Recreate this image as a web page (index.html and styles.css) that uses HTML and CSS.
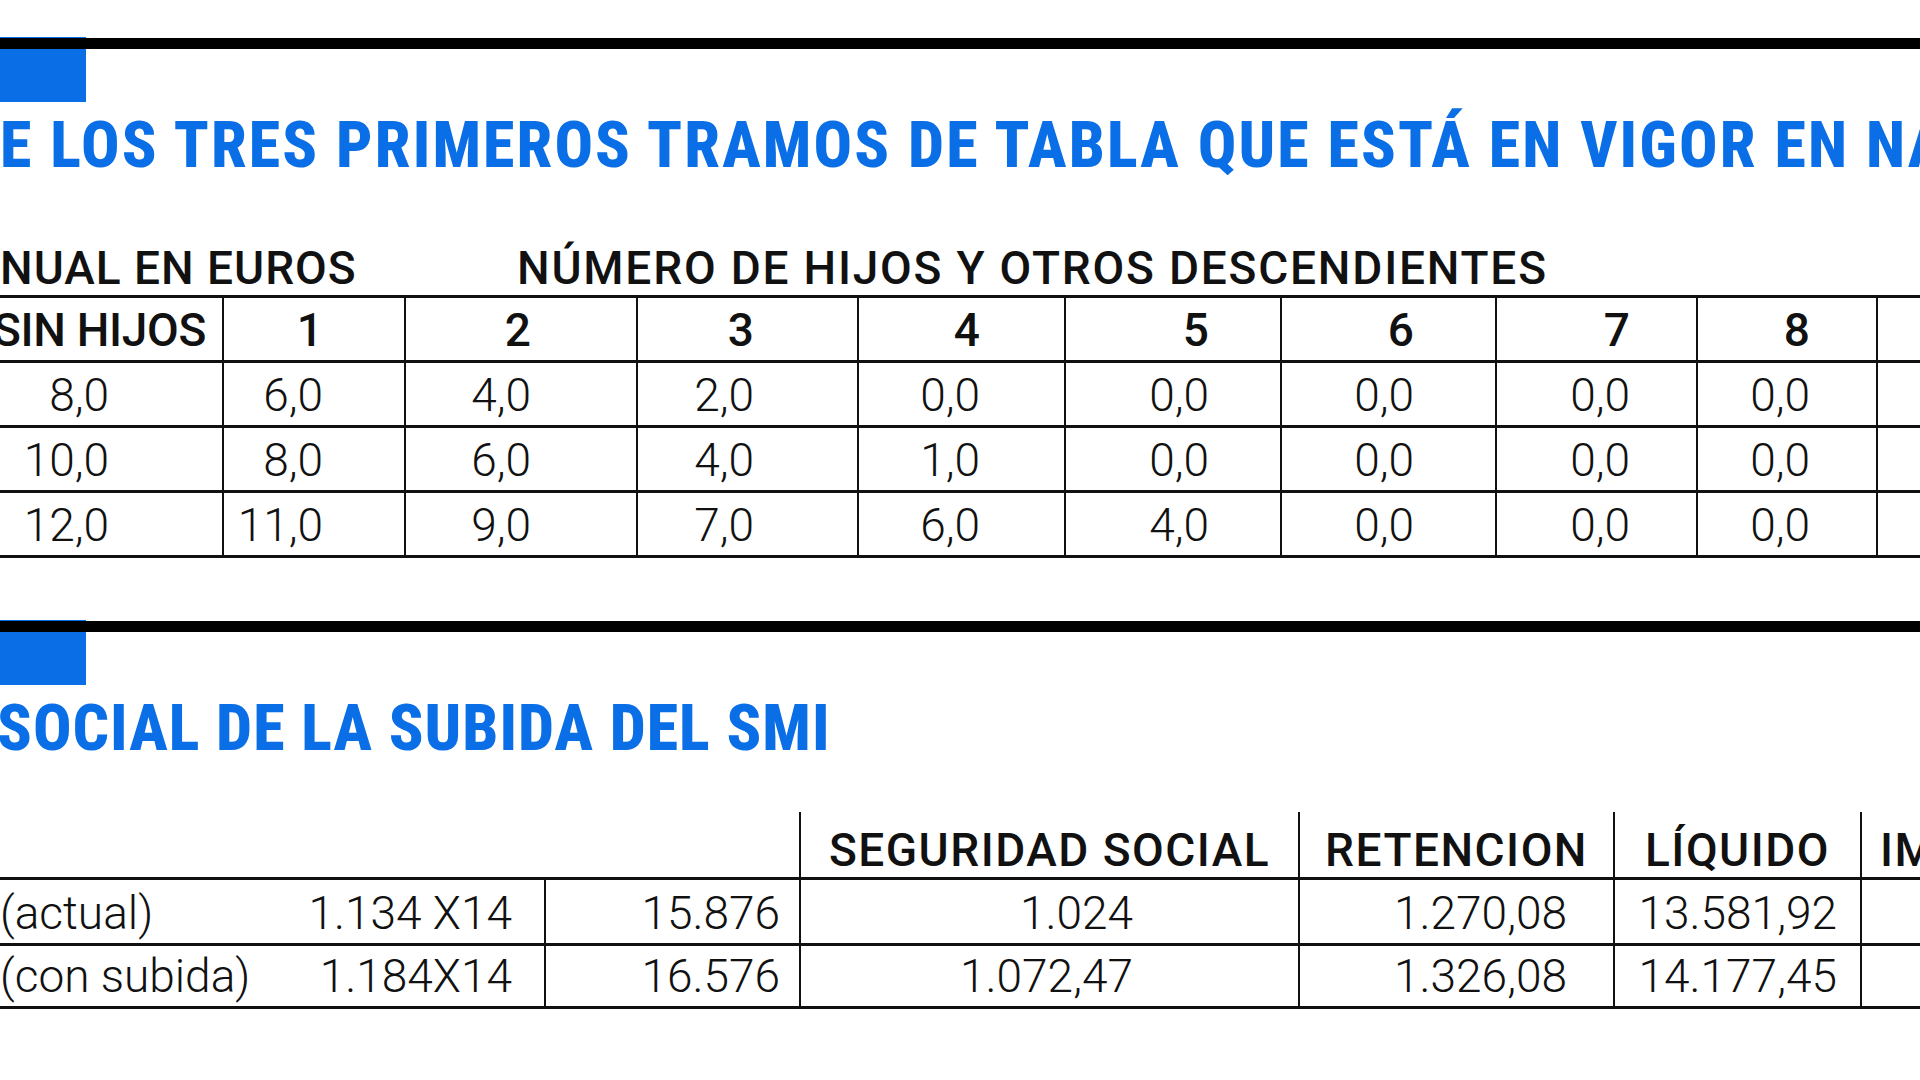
FILE: index.html
```html
<!DOCTYPE html>
<html lang="es">
<head>
<meta charset="utf-8">
<title>Tramos y subida del SMI</title>
<link rel="stylesheet" href="styles.css">
</head>
<body>
<main class="page">
  <section class="block">
    <div class="block-head">
      <div class="tab"></div>
      <div class="rule"></div>
    </div>
    <h1 class="title title-1">E LOS TRES PRIMEROS TRAMOS DE TABLA QUE ESTÁ EN VIGOR EN NA</h1>
    <div class="subhead">
      <span class="subhead-left">NUAL EN EUROS</span>
      <span class="subhead-right">NÚMERO DE HIJOS Y OTROS DESCENDIENTES</span>
    </div>
    <div class="grid1">
      <div class="r1 head">
        <div class="c">SIN HIJOS</div><div class="c">1</div><div class="c">2</div><div class="c">3</div><div class="c">4</div><div class="c">5</div><div class="c">6</div><div class="c">7</div><div class="c">8</div><div class="c"></div>
      </div>
      <div class="r1">
        <div class="c">8,0</div><div class="c">6,0</div><div class="c">4,0</div><div class="c">2,0</div><div class="c">0,0</div><div class="c">0,0</div><div class="c">0,0</div><div class="c">0,0</div><div class="c">0,0</div><div class="c"></div>
      </div>
      <div class="r1">
        <div class="c">10,0</div><div class="c">8,0</div><div class="c">6,0</div><div class="c">4,0</div><div class="c">1,0</div><div class="c">0,0</div><div class="c">0,0</div><div class="c">0,0</div><div class="c">0,0</div><div class="c"></div>
      </div>
      <div class="r1">
        <div class="c">12,0</div><div class="c">11,0</div><div class="c">9,0</div><div class="c">7,0</div><div class="c">6,0</div><div class="c">4,0</div><div class="c">0,0</div><div class="c">0,0</div><div class="c">0,0</div><div class="c"></div>
      </div>
    </div>
  </section>

  <section class="block block-2">
    <div class="block-head">
      <div class="tab"></div>
      <div class="rule"></div>
    </div>
    <h2 class="title title-2">SOCIAL DE LA SUBIDA DEL SMI</h2>
    <div class="grid2">
      <div class="r2 head">
        <div class="d"></div><div class="d"></div><div class="d"></div><div class="d">SEGURIDAD SOCIAL</div><div class="d">RETENCION</div><div class="d">LÍQUIDO</div><div class="d">IM</div>
      </div>
      <div class="r2 body first">
        <div class="d">(actual)</div><div class="d">1.134 X14</div><div class="d">15.876</div><div class="d">1.024</div><div class="d">1.270,08</div><div class="d">13.581,92</div><div class="d"></div>
      </div>
      <div class="r2 body">
        <div class="d">(con subida)</div><div class="d">1.184X14</div><div class="d">16.576</div><div class="d">1.072,47</div><div class="d">1.326,08</div><div class="d">14.177,45</div><div class="d"></div>
      </div>
    </div>
  </section>
</main>
</body>
</html>
```
FILE: styles.css
```css
* { box-sizing: border-box; }

html, body {
  margin: 0;
  padding: 0;
  background: #ffffff;
}

body {
  width: 1920px;
  height: 1080px;
  overflow: hidden;
  font-family: Roboto, "Liberation Sans", sans-serif;
  color: #111111;
}

.page {
  display: flex;
  flex-direction: column;
}

/* ---------- section heads ---------- */
.block { display: flex; flex-direction: column; }
.block-head {
  position: relative;
  margin-top: 37px;
  height: 65px;
}
.block-2 .block-head { margin-top: 62px; }

.tab {
  width: 86px;
  height: 65px;
  background: #0a6fe6;
}
.rule {
  position: absolute;
  top: 1px;
  left: 0;
  width: 100%;
  height: 11px;
  background: #000000;
}

.title {
  margin: 12px 0 0 0;
  font-family: "Roboto Condensed", Roboto, sans-serif;
  font-stretch: condensed;
  font-weight: 800;
  font-size: 64px;
  line-height: 64px;
  letter-spacing: 1px;
  color: #0a6fe6;
  white-space: nowrap;
}
.title-1 { letter-spacing: 2.1px; }
.title-2 { text-indent: -3px; }

/* ---------- table 1 ---------- */
.subhead {
  display: flex;
  margin-top: 67px;
  font-weight: 500;
  font-size: 46px;
  line-height: 46px;
  letter-spacing: 1px;
  white-space: nowrap;
}
.subhead-left { width: 517px; flex: none; }
.subhead-right { letter-spacing: 1.8px; }

.grid1 {
  margin-top: 4px;
  border-top: 3px solid #111;
}
.r1 {
  display: grid;
  grid-template-columns: 224px 182px 232px 221px 207px 216px 215px 201px 180px 1fr;
  height: 65px;
}
.c {
  display: flex;
  justify-content: flex-end;
  height: 65px;
  padding-top: 3px;
  border-bottom: 3px solid #111;
  border-right: 2px solid #111;
  font-weight: 300;
  font-size: 46px;
  line-height: 59px;
  white-space: nowrap;
}
.r1 .c:nth-child(10) { border-right: none; }
.r1.head .c { font-weight: 500; }

.r1 .c:nth-child(1) { padding-right: 113px; }
.r1 .c:nth-child(2) { padding-right: 81px; }
.r1 .c:nth-child(3) { padding-right: 105px; }
.r1 .c:nth-child(4) { padding-right: 103px; }
.r1 .c:nth-child(5) { padding-right: 84px; }
.r1 .c:nth-child(6) { padding-right: 71px; }
.r1 .c:nth-child(7) { padding-right: 81px; }
.r1 .c:nth-child(8) { padding-right: 66px; }
.r1 .c:nth-child(9) { padding-right: 66px; }
.r1.head .c:nth-child(1) { padding-right: 16px; letter-spacing: -0.3px; }

/* ---------- table 2 ---------- */
.grid2 { margin-top: 51px; }
.r2 {
  display: grid;
  grid-template-columns: 300px 246px 255px 499px 315px 247px 1fr;
}
.d {
  border-bottom: 3px solid #111;
  font-weight: 300;
  font-size: 46px;
  white-space: nowrap;
  text-align: right;
}
.r2.head .d {
  height: 68px;
  padding-top: 11px;
  line-height: 54px;
  font-weight: 500;
  letter-spacing: 1.5px;
  text-align: center;
}
.r2.head .d:nth-child(3),
.r2.head .d:nth-child(4),
.r2.head .d:nth-child(5),
.r2.head .d:nth-child(6) { border-right: 2px solid #111; }
.r2.head .d:nth-child(7) { text-align: left; padding-left: 18px; }

.r2.body .d {
  height: 63px;
  line-height: 60px;
}
.r2.body.first .d {
  height: 66px;
  padding-top: 3px;
}
.r2.body .d:nth-child(2),
.r2.body .d:nth-child(3),
.r2.body .d:nth-child(4),
.r2.body .d:nth-child(5),
.r2.body .d:nth-child(6) { border-right: 2px solid #111; }

.r2.body .d:nth-child(1) { text-align: left; }
.r2.body .d:nth-child(2) { padding-right: 32px; }
.r2.body .d:nth-child(3) { padding-right: 19px; }
.r2.body .d:nth-child(4) { padding-right: 165px; }
.r2.body .d:nth-child(5) { padding-right: 46px; }
.r2.body .d:nth-child(6) { padding-right: 23px; }
```
